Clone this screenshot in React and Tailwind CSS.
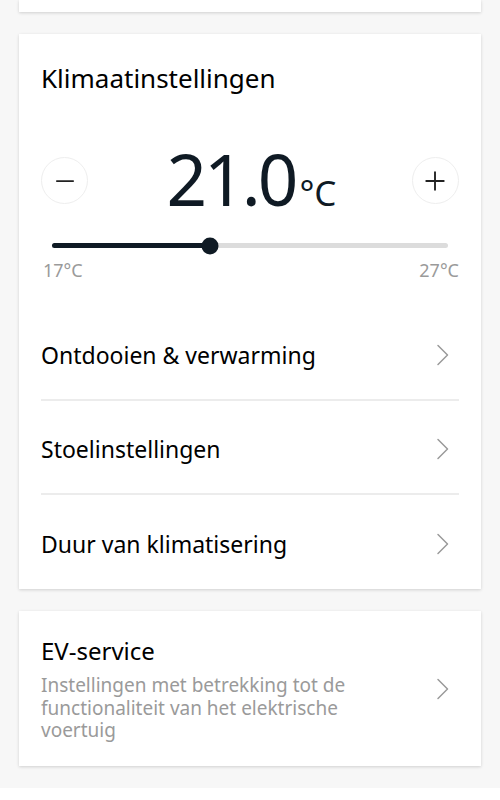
import { Minus, Plus } from "lucide-react";

const rows = ["Ontdooien & verwarming", "Stoelinstellingen", "Duur van klimatisering"];

function Chevron() {
  return (
    <svg width="14" height="22" viewBox="0 0 14 22" fill="none" className="mr-[9px] shrink-0">
      <path d="M2 1.5 L11.5 11 L2 20.5" stroke="#9a9a9a" strokeWidth="1.5" strokeLinecap="round" strokeLinejoin="round" />
    </svg>
  );
}

function Card({ className = "", children }) {
  return (
    <div className={`mx-[19px] bg-white shadow-[0_1px_3px_rgba(0,0,0,0.16)] ${className}`}>
      {children}
    </div>
  );
}

export default function App() {
  const min = 17;
  const max = 27;
  const temp = 21.0;
  const pct = ((temp - min) / (max - min)) * 100;

  return (
    <div className="w-[500px] h-[800px] overflow-hidden flex flex-col bg-[#f7f7f7] font-['Noto_Sans',sans-serif] text-[#111]">
      {/* previous card, scrolled out */}
      <Card className="h-[12px] shrink-0" />

      <Card className="mt-[22px] pt-[28px] px-[22px] shrink-0">
        <h2 className="text-[26px] leading-[32px] text-black">Klimaatinstellingen</h2>

        {/* temperature */}
        <div className="mt-[63px] h-[47px] flex items-center justify-between">
          <button className="w-[47px] h-[47px] rounded-full border border-[#eee] flex items-center justify-center text-[#222]">
            <Minus size={28} strokeWidth={1.5} />
          </button>
          <div className="flex items-baseline text-[#0f1a24] mb-[3px] ml-[3px]">
            <span className="text-[71px] leading-[72px] tracking-[-3px]">21.0</span>
            <span className="text-[35px] leading-[34px] ml-[4px]">°C</span>
          </div>
          <button className="w-[47px] h-[47px] rounded-full border border-[#eee] flex items-center justify-center text-[#222]">
            <Plus size={30} strokeWidth={1.5} />
          </button>
        </div>

        {/* slider */}
        <div className="mt-[39px] px-[11px]">
          <div className="relative h-[5px] rounded-full bg-[#dcdcdc]">
            <div className="h-full rounded-full bg-[#0f1a24]" style={{ width: `${pct}%` }} />
            <div
              className="absolute top-1/2 w-[17px] h-[17px] -translate-x-1/2 -translate-y-1/2 rounded-full bg-[#0f1a24]"
              style={{ left: `${pct}%` }}
            />
          </div>
        </div>
        <div className="mt-[11px] flex justify-between text-[18px] leading-[22px] text-[#9a9a9a]">
          <span className="ml-[2px]">17°C</span>
          <span>27°C</span>
        </div>

        {/* options */}
        <div className="mt-[26px]">
          {rows.map((r, i) => (
            <div
              key={r}
              className={`flex items-center justify-between h-[94px] pt-[4px] ${i < rows.length - 1 ? "border-b-2 border-[#ececec]" : ""}`}
            >
              <span className="text-[23px] text-black">{r}</span>
              <Chevron />
            </div>
          ))}
        </div>
      </Card>

      <Card className="mt-[22px] px-[22px] pt-[25px] pb-[24px] shrink-0">
        <div className="flex items-center justify-between">
          <div className="w-[340px]">
            <div className="text-[24px] leading-[30px] text-black">EV-service</div>
            <div className="mt-[8px] text-[19px] leading-[22.5px] text-[#9a9a9a]">
              Instellingen met betrekking tot de functionaliteit van het elektrische voertuig
            </div>
          </div>
          <Chevron />
        </div>
      </Card>

      <div className="mt-[22px] flex-1 bg-white" />
    </div>
  );
}
